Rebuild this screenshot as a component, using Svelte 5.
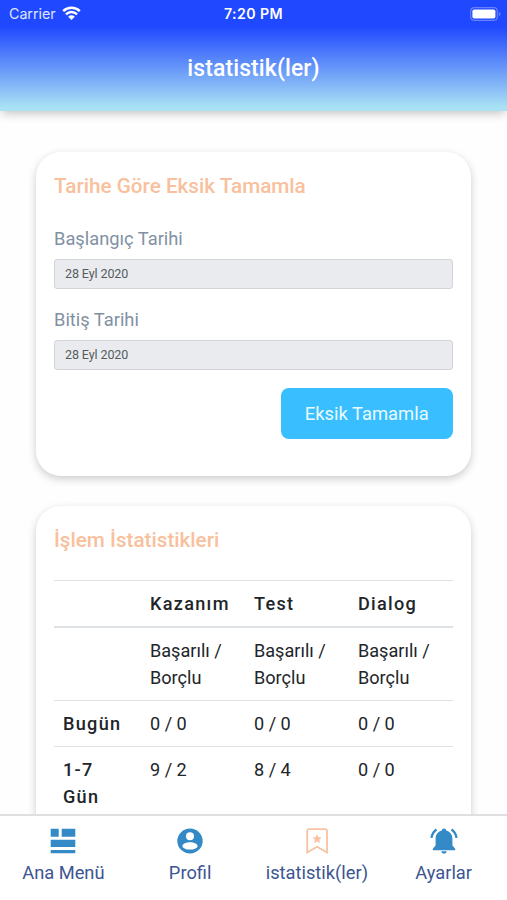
<script lang="ts">
	interface Row {
		label: string;
		cells: string[];
	}

	const dates = [
		{ id: "start", label: "Başlangıç Tarihi", value: "28 Eyl 2020" },
		{ id: "end", label: "Bitiş Tarihi", value: "28 Eyl 2020" },
	];

	const columns = ["Kazanım", "Test", "Dialog"];

	const rows: Row[] = [
		{ label: "", cells: ["Başarılı / Borçlu", "Başarılı / Borçlu", "Başarılı / Borçlu"] },
		{ label: "Bugün", cells: ["0 / 0", "0 / 0", "0 / 0"] },
		{ label: "1-7 Gün", cells: ["9 / 2", "8 / 4", "0 / 0"] },
	];

	const tabs = [
		{ icon: "menu", label: "Ana Menü" },
		{ icon: "profile", label: "Profil" },
		{ icon: "stats", label: "istatistik(ler)" },
		{ icon: "bell", label: "Ayarlar" },
	];

	let active = $state("stats");
</script>

<div class="app">
	<header>
		<div class="status">
			<div class="carrier">
				<span>Carrier</span>
				<svg width="19" height="15" viewBox="0 0 19 15">
					<path d="M1.2 5.2a11.8 11.8 0 0 1 16.6 0M4 8.3a7.8 7.8 0 0 1 11 0" fill="none" stroke="#fff" stroke-width="2.5" />
					<path d="M6.2 10.7a4.7 4.7 0 0 1 6.6 0L9.5 14z" fill="#fff" />
				</svg>
			</div>
			<span class="time">7:20 PM</span>
			<svg class="battery" width="31" height="14" viewBox="0 0 31 14">
				<rect x=".7" y=".7" width="26.6" height="12.6" rx="3.5" fill="none" stroke="#6680ff" stroke-width="1.2" />
				<rect x="2.4" y="2.4" width="23" height="9.2" rx="1.8" fill="#fff" />
				<path d="M28.8 4.8q1.8 1 1.8 2.2t-1.8 2.2z" fill="#6680ff" />
			</svg>
		</div>
		<h1>istatistik(ler)</h1>
	</header>

	<main>
		<section class="card">
			<h2>Tarihe Göre Eksik Tamamla</h2>
			{#each dates as date}
				<div class="field">
					<label for={date.id}>{date.label}</label>
					<input id={date.id} value={date.value} readonly>
				</div>
			{/each}
			<button class="submit">Eksik Tamamla</button>
		</section>

		<section class="card">
			<h2>İşlem İstatistikleri</h2>
			<table>
				<thead>
					<tr>
						<th class="first"></th>
						{#each columns as column}
							<th>{column}</th>
						{/each}
					</tr>
				</thead>
				<tbody>
					{#each rows as row}
						<tr>
							<th>{row.label}</th>
							{#each row.cells as cell}
								<td>{cell}</td>
							{/each}
						</tr>
					{/each}
				</tbody>
			</table>
		</section>
	</main>

	<nav>
		{#each tabs as tab}
			<button class="tab" class:active={active === tab.icon} onclick={() => active = tab.icon}>
				<svg width="28" height="26" viewBox="0 0 28 26">
					{#if tab.icon === "menu"}
						<path d="M1.7.7h8v8h-8zM12.7.7h13.6v8H12.7zM1.7 11.7h24.6v7.4H1.7zM1.7 22.1h24.6v3.2H1.7z" />
					{:else if tab.icon === "profile"}
						<path fill-rule="evenodd" d="M14 .5a12.7 12.5 0 1 0 0 25 12.7 12.5 0 0 0 0-25zM14 4.2a4 4 0 1 1 0 8 4 4 0 0 1 0-8zM14 14.3c4.2 0 7.6 1.7 7.6 3.6S18.2 21.6 14 21.6s-7.6-1.8-7.6-3.7 3.4-3.6 7.6-3.6z" />
					{:else if tab.icon === "stats"}
						<path class="line" d="M5.8 1.2h16.5a1.7 1.7 0 0 1 1.7 1.7v21.6l-9.9-5.8-9.9 5.8V2.9a1.7 1.7 0 0 1 1.6-1.7z" />
						<path d="m14.1 6.2 1.4 3 3.2.4-2.4 2.2.7 3.3-2.9-1.7-2.9 1.7.7-3.3-2.4-2.2 3.2-.4z" />
					{:else}
						<path d="M14 .4c1.3 0 2.1.8 2.2 2.2 4.3 1.2 6.2 4.5 6.2 8.4v6.5l2.8 3.3v1.4H2.8v-1.4l2.8-3.3V11c0-3.9 1.9-7.2 6.2-8.4C11.9 1.2 12.7.4 14 .4zM11.2 23.2h5.6c-.3 1.4-1.3 2.3-2.8 2.3s-2.5-.9-2.8-2.3z" />
						<path class="ring" d="M6.5 1.5Q2.2 4.4 1.5 9.9M21.5 1.5q4.3 2.9 5 8.4" />
					{/if}
				</svg>
				<span>{tab.label}</span>
			</button>
		{/each}
	</nav>
</div>

<style>
	:global(body) {
		margin: 0;
		overflow: hidden;
	}

	.app {
		display: flex;
		flex-direction: column;
		height: 100vh;
		overflow: hidden;
		background: #fefefe;
		font-family: Roboto, sans-serif;
		color: #212529;
	}

	header {
		flex: none;
		height: 110.5px;
		background: linear-gradient(#2048ff 0, #2048ff 24%, #aae2f3 97%);
		box-shadow: 0 5px 9px -2px rgba(0, 0, 0, 0.22);
		color: #fff;
	}

	.status {
		display: grid;
		grid-template-columns: 1fr auto 1fr;
		align-items: center;
		height: 27px;
		padding: 0 6px;
		font-family: Inter, sans-serif;
		font-size: 14.3px;
	}

	.carrier {
		display: flex;
		align-items: center;
		gap: 6px;
		padding-left: 3px;
		color: #dfe5ff;
		letter-spacing: -0.05px;
	}

	.time {
		font-size: 14.2px;
		font-weight: 600;
		letter-spacing: 0.4px;
	}

	.battery {
		justify-self: end;
	}

	h1 {
		margin: 26px 0 0;
		font-size: 23px;
		line-height: 31px;
		font-weight: 500;
		letter-spacing: 0.1px;
		text-align: center;
	}

	main {
		flex: 1;
		min-height: 0;
		overflow: hidden;
		padding: 41.5px 36px 0;
	}

	.card {
		display: flow-root;
		box-sizing: border-box;
		height: 324px;
		margin-bottom: 30px;
		padding: 19px 18px 18px;
		border-radius: 25px;
		background: #fff;
		box-shadow: 0 3px 8px rgba(0, 0, 0, 0.2);
	}

	.card:last-child {
		height: 500px;
	}

	h2 {
		margin: 0 0 25px;
		font-size: 20.7px;
		line-height: 30px;
		font-weight: 500;
		color: #f8c09c;
	}

	.field {
		margin-bottom: 18px;
	}

	.field label {
		display: block;
		margin-bottom: 6.5px;
		font-size: 18.3px;
		line-height: 26px;
		color: #8191a3;
	}

	.field input {
		display: block;
		box-sizing: border-box;
		width: 100%;
		height: 30.5px;
		padding: 0 10px;
		border: 1px solid #d1d5d9;
		border-radius: 3px;
		background: #e9ebee;
		font: 12.5px Roboto, sans-serif;
		letter-spacing: -0.1px;
		color: #565b60;
	}

	.submit {
		float: right;
		width: 172.5px;
		height: 51px;
		padding: 0;
		border: 0;
		border-radius: 8px;
		background: #39bfff;
		font: 18.4px Roboto, sans-serif;
		color: #e9faff;
	}

	table {
		width: 100%;
		table-layout: fixed;
		border-spacing: 0;
		font-size: 18.1px;
		line-height: 27px;
	}

	th, td {
		padding: 9px;
		border-top: 1px solid #dee2e6;
		text-align: left;
		vertical-align: top;
	}

	th {
		font-weight: 500;
		letter-spacing: 1.3px;
	}

	thead th {
		height: 27px;
		border-bottom: 2px solid #dee2e6;
	}

	.first {
		width: 69px;
	}

	tbody tr:first-child > * {
		border-top: 0;
	}

	nav {
		display: grid;
		grid-template-columns: repeat(4, 1fr);
		flex: none;
		box-sizing: border-box;
		height: 86px;
		border-top: 2px solid #dedfe0;
		background: #fff;
	}

	.tab {
		display: flex;
		flex-direction: column;
		align-items: center;
		gap: 7px;
		padding: 12px 0 0;
		border: 0;
		background: none;
		font: 18.3px/24px Roboto, sans-serif;
		color: #3d5591;
		white-space: nowrap;
	}

	.tab svg {
		fill: #348ac7;
	}

	.tab.active svg {
		fill: #f8c3a3;
	}

	.line {
		fill: none;
		stroke: #f8c3a3;
		stroke-width: 1.8;
	}

	.tab:not(.active) .line {
		stroke: #348ac7;
	}

	.ring {
		fill: none;
		stroke: #348ac7;
		stroke-width: 2.3;
	}

	.tab.active .ring {
		stroke: #f8c3a3;
	}
</style>
